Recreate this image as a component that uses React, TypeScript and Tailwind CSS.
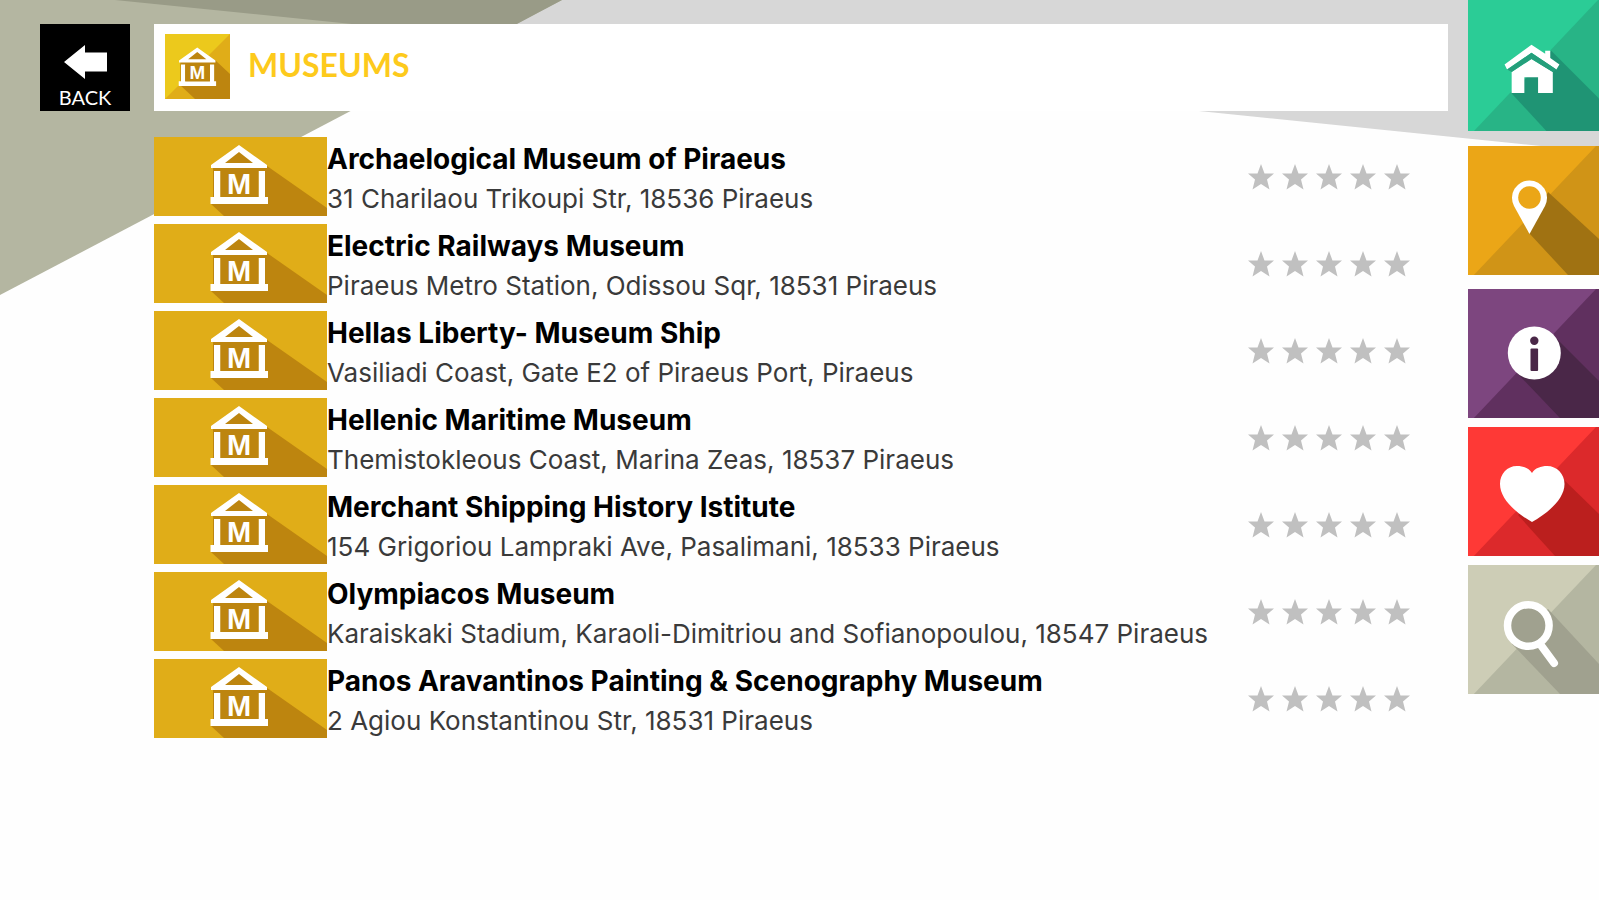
import type { ReactNode } from "react";

type Museum = {
  name: string;
  address: string;
};

type NavItem = {
  label: string;
  size: string;
  base: string;
  shade: string;
  shadow: string;
  shadowPoints: string;
  icon: ReactNode;
};

const museums: Museum[] = [
  { name: "Archaelogical Museum of Piraeus", address: "31 Charilaou Trikoupi Str, 18536 Piraeus" },
  { name: "Electric Railways Museum", address: "Piraeus Metro Station, Odissou Sqr, 18531 Piraeus" },
  { name: "Hellas Liberty- Museum Ship", address: "Vasiliadi Coast, Gate E2 of Piraeus Port, Piraeus" },
  { name: "Hellenic Maritime Museum", address: "Themistokleous Coast, Marina Zeas, 18537 Piraeus" },
  { name: "Merchant Shipping History Istitute", address: "154 Grigoriou Lampraki Ave, Pasalimani, 18533 Piraeus" },
  { name: "Olympiacos Museum", address: "Karaiskaki Stadium, Karaoli-Dimitriou and Sofianopoulou, 18547 Piraeus" },
  { name: "Panos Aravantinos Painting & Scenography Museum", address: "2 Agiou Konstantinou Str, 18531 Piraeus" },
];

const navItems: NavItem[] = [
  {
    label: "Home",
    size: "h-[131px] mb-[15px]",
    base: "#2bcc96",
    shade: "#28b486",
    shadow: "#1f9474",
    shadowPoints: "82,50 131,99 131,131 79,131 43,92",
    icon: (
      <>
        <path d="M62.5 44 L76 53 V50 H81 V57 L90 63.5 L87 68.5 L62.5 52 L38.5 68.5 L36 63.5 Z" fill="#fff" />
        <path d="M62.5 58 L83.5 71 V91.5 H69 V76 H55.5 V91.5 H43 V71 Z" fill="#fff" />
        <path d="M38.5 68.5 L62.5 52 L87 68.5 L83.5 71 L62.5 58 L43 71 Z" fill="#249f7b" />
      </>
    ),
  },
  {
    label: "Map",
    size: "h-[129px] mb-[14px]",
    base: "#eba617",
    shade: "#d09417",
    shadow: "#a07212",
    shadowPoints: "80,46 131,93 131,129 100,129 61,87",
    icon: (
      <>
        <path d="M61.5 88 L46 60 A17.5 17.5 0 1 1 77 60 Z" fill="#fff" />
        <circle cx="61.5" cy="51.5" r="11.3" fill="#eba617" />
      </>
    ),
  },
  {
    label: "Information",
    size: "h-[129px] mb-[9px]",
    base: "#7d467f",
    shade: "#60305f",
    shadow: "#4a2748",
    shadowPoints: "89,50 131,92 131,129 92,129 49,84",
    icon: (
      <>
        <circle cx="66.3" cy="64" r="26.5" fill="#fff" />
        <circle cx="66.3" cy="51.7" r="4.2" fill="#4a2748" />
        <rect x="62.5" y="59.5" width="7.6" height="22.5" rx="1" fill="#4a2748" />
      </>
    ),
  },
  {
    label: "Favourites",
    size: "h-[129px] mb-[9px]",
    base: "#fe3936",
    shade: "#dc292b",
    shadow: "#bb1f1e",
    shadowPoints: "93,50 131,87 131,129 87,129 50,88",
    icon: (
      <path
        d="M64 46 C67 41 73 39 79 39 C89 39 96.5 47 96.5 57 C96.5 72 80 86 64 95 C48 86 32 72 32 57 C32 47 39 39 49 39 C55 39 61 41 64 46 Z"
        fill="#fff"
      />
    ),
  },
  {
    label: "Search",
    size: "h-[129px]",
    base: "#cdcdb6",
    shade: "#b4b6a1",
    shadow: "#a0a18f",
    shadowPoints: "80,44 131,99 131,129 92,129 44,79",
    icon: (
      <>
        <circle cx="60.3" cy="60.5" r="20.8" fill="#a0a18f" stroke="#fff" strokeWidth="7.5" />
        <path d="M73.5 81 L86 98" stroke="#fff" strokeWidth="8" strokeLinecap="round" />
      </>
    ),
  },
];

function MuseumGlyph() {
  return (
    <g>
      <path d="M85 8 L111 28 V66 H59 V28 Z" fill="#bd850f" />
      <path d="M85 7 L113 27 V30 H57 V27 Z M85 14 L71 25 H99 Z" fill="#fff" fillRule="evenodd" />
      <path d="M60 33 H66.5 V59 H104.5 V33 H111 V59 H114 V66 H56.5 V59 H60 Z" fill="#fff" />
      <path d="M66.5 33 H104.5 V59 H66.5 Z" fill="#bd850f" />
      <text
        x="85"
        y="56"
        textAnchor="middle"
        fill="#fff"
        className="font-['Liberation_Sans',sans-serif] text-[29px] font-bold"
      >
        M
      </text>
    </g>
  );
}

function MuseumThumb() {
  return (
    <svg viewBox="0 0 173 79" className="h-[79px] w-[173px] shrink-0 bg-[#e0ad18]" aria-hidden="true">
      <path d="M113 29 L173 71 V79 H70 L57 67 Z" fill="#bd850f" />
      <g transform="translate(0 1)">
        <MuseumGlyph />
      </g>
    </svg>
  );
}

function CategoryIcon() {
  return (
    <svg viewBox="0 0 65 65" className="size-[65px] shrink-0 bg-[#ecc91c]" aria-hidden="true">
      <path d="M65 0 V65 H0 Z" fill="#e0ad18" />
      <path d="M50 26 L65 40 V65 H30 L14 50 Z" fill="#bd850f" />
      <g transform="translate(-23 9) scale(0.65)">
        <MuseumGlyph />
      </g>
    </svg>
  );
}

function Stars() {
  return (
    <div className="flex gap-2" role="img" aria-label="Not rated">
      {[1, 2, 3, 4, 5].map((n) => (
        <svg key={n} viewBox="0 0 26 26" className="size-[26px]" aria-hidden="true">
          <path
            d="M13 0 L16.5 9.5 L26 9.5 L19 15.5 L21.5 25.5 L13 20 L4.5 25.5 L7 15.5 L0 9.5 L9.5 9.5 Z"
            fill="#c0c0c0"
          />
        </svg>
      ))}
    </div>
  );
}

function Backdrop() {
  return (
    <svg
      viewBox="0 0 1599 300"
      preserveAspectRatio="none"
      className="absolute inset-x-0 top-0 -z-10 h-[300px] w-full"
      aria-hidden="true"
    >
      <path d="M115 0 H1599 V152 Z" fill="#d7d7d7" />
      <path d="M0 0 H562 L0 295 Z" fill="#b4b6a1" />
      <path d="M115 0 H562 L500 33 L440 33 Z" fill="#999b87" />
    </svg>
  );
}

function SideNav() {
  return (
    <nav className="flex w-[131px] shrink-0 flex-col">
      {navItems.map((item) => (
        <button key={item.label} type="button" aria-label={item.label} className={`block w-full cursor-pointer ${item.size}`}>
          <svg viewBox="0 0 131 129" preserveAspectRatio="xMinYMin slice" className="block h-full w-full" aria-hidden="true">
            <path d="M0 0 H131 V131 H0 Z" fill={item.base} />
            <path d="M128 0 H131 V131 H4 Z" fill={item.shade} />
            <polygon points={item.shadowPoints} fill={item.shadow} />
            {item.icon}
          </svg>
        </button>
      ))}
    </nav>
  );
}

function App() {
  return (
    <div className="relative isolate flex min-h-screen bg-[#fefefe] pl-10 font-['Inter',sans-serif]">
      <Backdrop />

      <div className="flex min-w-0 flex-1 items-start gap-6 pt-6 pr-5">
        <button
          type="button"
          className="flex h-[87px] w-[90px] shrink-0 cursor-pointer flex-col items-center justify-end bg-black pb-0.5 text-white"
        >
          <svg viewBox="0 0 43 34" className="h-[34px] w-[43px]" aria-hidden="true">
            <path d="M0 17 L21 0 V7.5 H43 V26.5 H21 V34 Z" fill="#fff" />
          </svg>
          <span className="mt-1.5 font-['Lato',sans-serif] text-xl leading-6">BACK</span>
        </button>

        <main className="min-w-0 flex-1">
          <header className="flex h-[87px] items-center gap-[18px] bg-white px-[11px] pb-0.5">
            <CategoryIcon />
            <h1 className="pb-1 font-['Lato',sans-serif] text-[32px] leading-10 font-bold text-[#fdca1c]">MUSEUMS</h1>
          </header>

          <ul className="mt-[26px]">
            {museums.map((museum) => (
              <li key={museum.name} className="flex h-[87px] items-start">
                <MuseumThumb />
                <div className="min-w-0 flex-1 pt-0.5 whitespace-nowrap">
                  <h2 className="text-[28px] leading-10 font-bold text-black">{museum.name}</h2>
                  <p className="text-[26px] leading-10 text-[#3a3a3a]">{museum.address}</p>
                </div>
                <div className="pt-[27px] pr-[38px]">
                  <Stars />
                </div>
              </li>
            ))}
          </ul>
        </main>
      </div>

      <SideNav />
    </div>
  );
}

export default App;
